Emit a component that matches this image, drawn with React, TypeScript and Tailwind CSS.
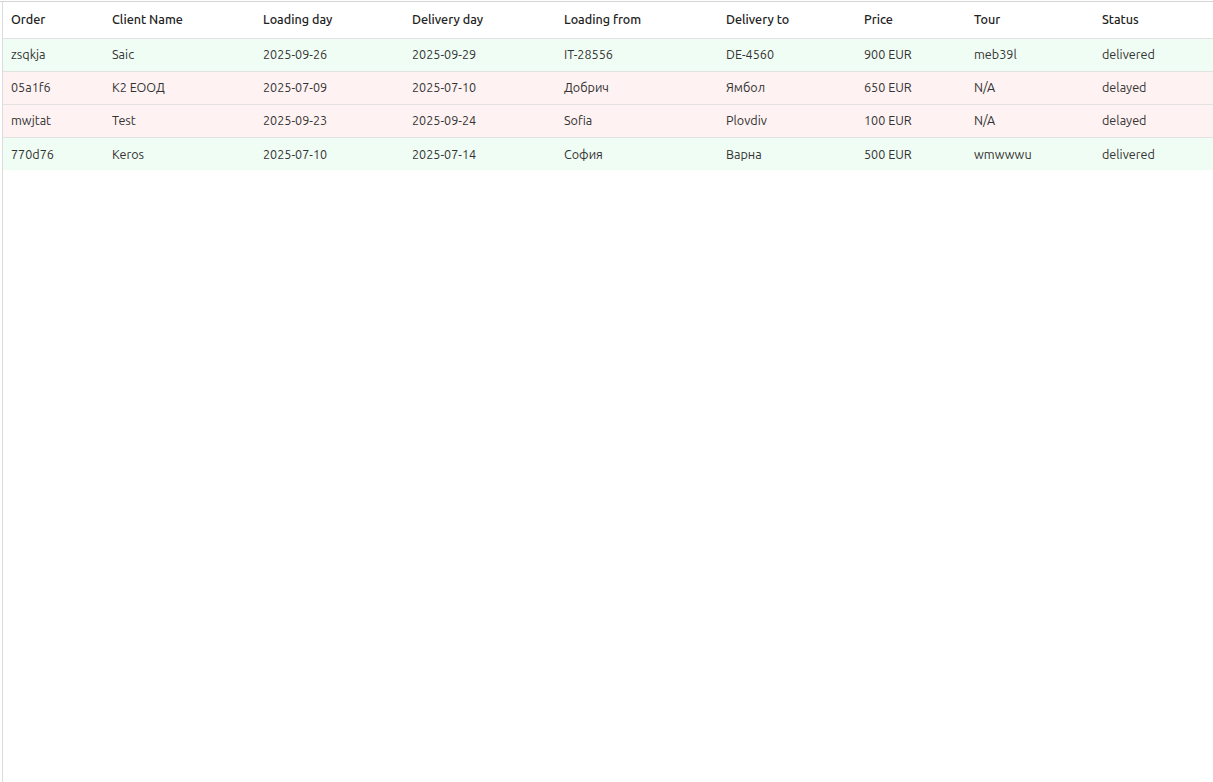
const rows = [
  { order: 'zsqkja', client: 'Saic', loading: '2025-09-26', delivery: '2025-09-29', from: 'IT-28556', to: 'DE-4560', price: '900 EUR', tour: 'meb39l', status: 'delivered' },
  { order: '05a1f6', client: 'К2 ЕООД', loading: '2025-07-09', delivery: '2025-07-10', from: 'Добрич', to: 'Ямбол', price: '650 EUR', tour: 'N/A', status: 'delayed' },
  { order: 'mwjtat', client: 'Test', loading: '2025-09-23', delivery: '2025-09-24', from: 'Sofia', to: 'Plovdiv', price: '100 EUR', tour: 'N/A', status: 'delayed' },
  { order: '770d76', client: 'Keros', loading: '2025-07-10', delivery: '2025-07-14', from: 'София', to: 'Варна', price: '500 EUR', tour: 'wmwwwu', status: 'delivered' },
];

const headers = ['Order', 'Client Name', 'Loading day', 'Delivery day', 'Loading from', 'Delivery to', 'Price', 'Tour', 'Status'];
const widths = ['w-[101px]', 'w-[151px]', 'w-[149px]', 'w-[152px]', 'w-[162px]', 'w-[138px]', 'w-[110px]', 'w-[128px]', 'w-auto'];

function App() {
  return (
    <div className="min-h-screen mt-px border-t border-[#d4d4d4] bg-white font-['Ubuntu','Noto_Sans',sans-serif] text-[12.6px] text-[#333]">
      <div className="ml-[2px] min-h-[780px] border-l border-[#dcdcdc]">
        <table className="w-full table-fixed border-collapse">
          <thead>
            <tr className="h-[36px] border-b border-[#e2e2e2]">
              {headers.map((h, i) => (
                <th key={h} className={`${widths[i]} px-2 text-left font-medium text-[#222]`}>{h}</th>
              ))}
            </tr>
          </thead>
          <tbody>
            {rows.map((r, i) => (
              <tr
                key={r.order}
                className={`h-[33.1px] ${i < rows.length - 1 ? 'border-b border-[#e2e2e2]' : ''} ${r.status === 'delivered' ? 'bg-[#f0fdf4]' : 'bg-[#fef2f2]'}`}
              >
                <td className="px-2">{r.order}</td>
                <td className="px-2">{r.client}</td>
                <td className="px-2">{r.loading}</td>
                <td className="px-2">{r.delivery}</td>
                <td className="px-2">{r.from}</td>
                <td className="px-2">{r.to}</td>
                <td className="px-2">{r.price}</td>
                <td className="px-2">{r.tour}</td>
                <td className="px-2">{r.status}</td>
              </tr>
            ))}
          </tbody>
        </table>
      </div>
    </div>
  );
}

export default App;
